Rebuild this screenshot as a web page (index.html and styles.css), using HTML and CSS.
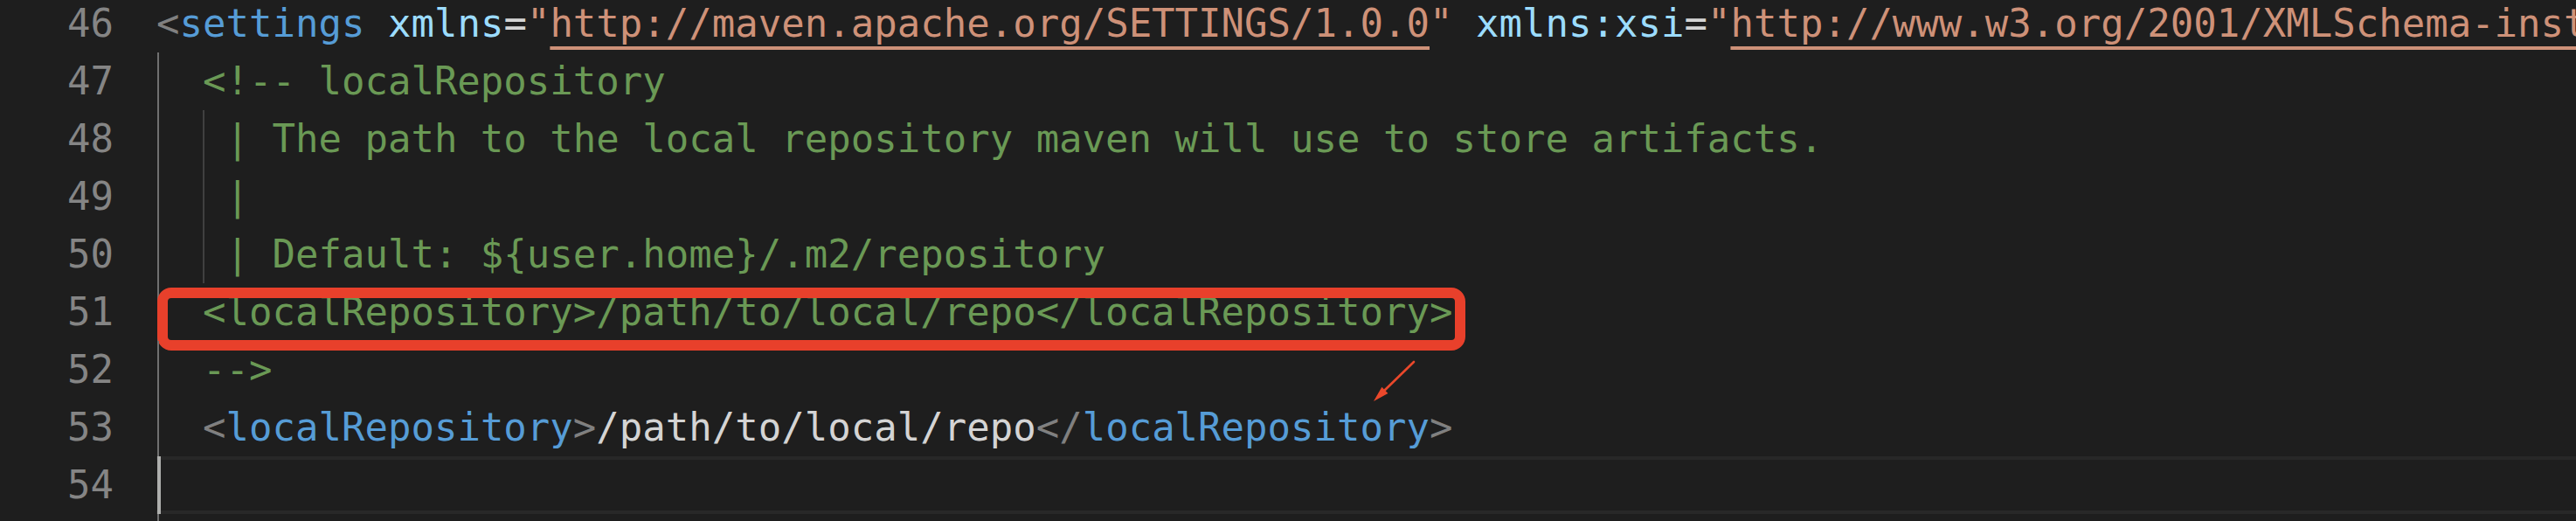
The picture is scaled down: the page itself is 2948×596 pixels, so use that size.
FILE: index.html
```html
<!DOCTYPE html>
<html lang="en">
<head>
<meta charset="utf-8">
<title>settings.xml</title>
<link rel="stylesheet" href="styles.css">
</head>
<body>
<div class="editor">
  <div class="row"><span class="ln">46</span><span class="code"><span class="p">&lt;</span><span class="t">settings</span> <span class="a">xmlns</span><span class="e">=</span><span class="s">"<span class="u">http://maven.apache.org/SETTINGS/1.0.0</span>"</span> <span class="a">xmlns:xsi</span><span class="e">=</span><span class="s">"<span class="u">http://www.w3.org/2001/XMLSchema-instance</span>"</span></span></div>
  <div class="row"><span class="ln">47</span><span class="code g1"><span class="c">  &lt;!-- localRepository</span></span></div>
  <div class="row"><span class="ln">48</span><span class="code g1 g2"><span class="c">   | The path to the local repository maven will use to store artifacts.</span></span></div>
  <div class="row"><span class="ln">49</span><span class="code g1 g2"><span class="c">   |</span></span></div>
  <div class="row"><span class="ln">50</span><span class="code g1 g2"><span class="c">   | Default: ${user.home}/.m2/repository</span></span></div>
  <div class="row"><span class="ln">51</span><span class="code g1 anchor"><span class="c">  &lt;localRepository&gt;/path/to/local/repo&lt;/localRepository&gt;</span><span class="mark"></span></span></div>
  <div class="row"><span class="ln">52</span><span class="code g1 anchor"><span class="c">  --&gt;</span><svg class="arrow" width="60" height="56" viewBox="0 0 60 56"><line x1="54" y1="4" x2="19" y2="38" stroke="#ea482b" stroke-width="2.6" stroke-linecap="round"/><polygon points="8,49 24.4,40 17.4,32.8" fill="#ea482b"/></svg></span></div>
  <div class="row"><span class="ln">53</span><span class="code g1">  <span class="p">&lt;</span><span class="t">localRepository</span><span class="p">&gt;</span>/path/to/local/repo<span class="p">&lt;/</span><span class="t">localRepository</span><span class="p">&gt;</span></span></div>
  <div class="row"><span class="ln">54</span><span class="code g1 current"><span class="cursor"></span></span></div>
  <div class="row tail"><span class="ln"></span><span class="code g1"></span></div>
</div>
</body>
</html>
```
FILE: styles.css
```css
html, body {
  margin: 0;
  padding: 0;
  background: #1e1e1e;
  overflow: hidden;
}

.editor {
  margin-top: -6px;
  font-family: "DejaVu Sans Mono", "Liberation Mono", monospace;
  font-size: 44px;
  line-height: 66px;
  color: #d4d4d4;
}

.row {
  display: flex;
  height: 66px;
}

.row.tail {
  height: 8px;
}

.ln {
  flex: 0 0 130px;
  text-align: right;
  color: #858585;
}

.code {
  flex: 1;
  margin-left: 49px;
  white-space: pre;
  box-sizing: border-box;
  height: 66px;
}

.tail .code {
  height: 8px;
}

.code.g1 {
  background: linear-gradient(#707070, #707070) no-repeat 1px 0 / 2px 100%;
}

.code.g1.g2 {
  background:
    linear-gradient(#707070, #707070) no-repeat 1px 0 / 2px 100%,
    linear-gradient(#404040, #404040) no-repeat 53px 0 / 2px 100%;
}

.code.current {
  border-top: 4px solid #282828;
  border-bottom: 4px solid #282828;
}

.cursor {
  display: inline-block;
  width: 4px;
  height: 66px;
  margin-top: -4px;
  margin-left: 1px;
  vertical-align: top;
  background: #aeafad;
}

.anchor {
  position: relative;
}

.p { color: #808080; }
.t { color: #569cd6; }
.a { color: #9cdcfe; }
.e { color: #d4d4d4; }
.s { color: #ce9178; }
.c { color: #6a9955; }

.u {
  text-decoration: underline;
  text-decoration-thickness: 4px;
  text-underline-offset: 11px;
  text-decoration-skip-ink: none;
}

.mark {
  position: absolute;
  left: 1px;
  top: 5px;
  width: 1497px;
  height: 72px;
  box-sizing: border-box;
  border: 12px solid #e8402b;
  border-radius: 16px;
}

.arrow {
  position: absolute;
  left: 1385px;
  top: 20px;
  overflow: visible;
}
```
